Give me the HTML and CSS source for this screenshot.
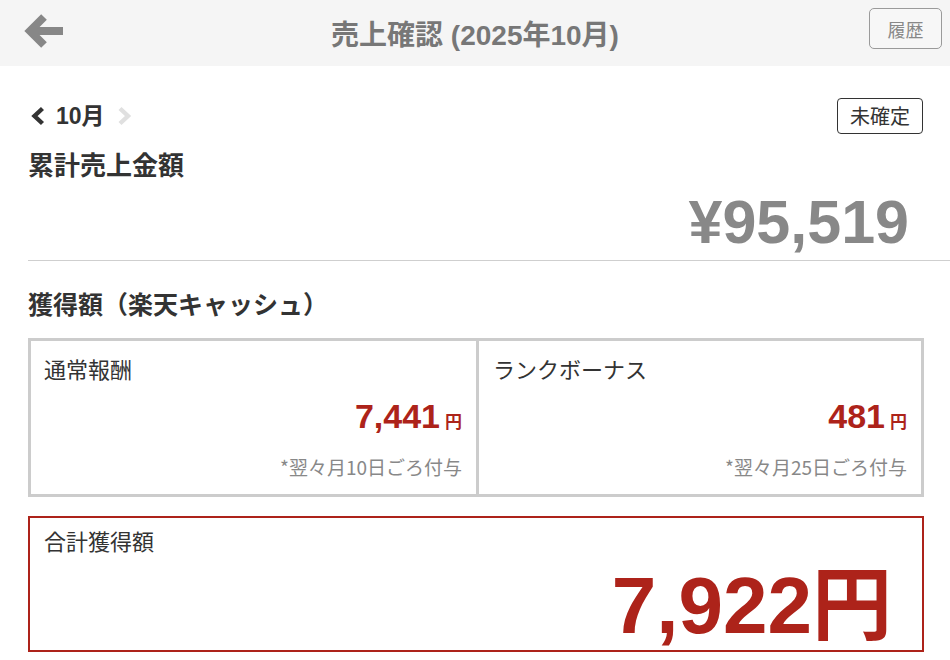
FILE: index.html
```html
<!DOCTYPE html>
<html lang="ja">
<head>
<meta charset="utf-8">
<title>売上確認</title>
<link rel="stylesheet" href="styles.css">
</head>
<body>
<header class="topbar">
  <button class="back" aria-label="戻る">
    <svg width="44" height="40" viewBox="0 0 44 40"><path d="M7 18 H40" stroke="#878787" stroke-width="8" fill="none"/><path d="M21 4 L7 18 L21 32" stroke="#878787" stroke-width="8" fill="none" stroke-linejoin="miter"/></svg>
  </button>
  <h1 class="title">売上確認 (2025年10月)</h1>
  <button class="history">履歴</button>
</header>
<main class="content">
  <div class="month-row">
    <div class="month-nav">
      <svg class="chev" width="16" height="20" viewBox="0 0 16 20"><path d="M13.5 2.5 L5.5 10 L13.5 17.5" stroke="#333" stroke-width="4.4" fill="none"/></svg>
      <span class="month">10月</span>
      <svg class="chev next" width="16" height="20" viewBox="0 0 16 20"><path d="M3 2.5 L11 10 L3 17.5" stroke="#e0e0e0" stroke-width="4.4" fill="none"/></svg>
    </div>
    <span class="badge">未確定</span>
  </div>
  <h2 class="heading">累計売上金額</h2>
  <div class="sales">¥95,519</div>
  <hr class="divider">
  <h2 class="heading heading2">獲得額（楽天キャッシュ）</h2>
  <div class="cards">
    <div class="card">
      <div class="card-label">通常報酬</div>
      <div class="card-amount"><span class="num">7,441</span><span class="yen">円</span></div>
      <div class="card-note">*翌々月10日ごろ付与</div>
    </div>
    <div class="card">
      <div class="card-label">ランクボーナス</div>
      <div class="card-amount"><span class="num">481</span><span class="yen">円</span></div>
      <div class="card-note">*翌々月25日ごろ付与</div>
    </div>
  </div>
  <div class="total">
    <div class="card-label">合計獲得額</div>
    <div class="total-amount"><span class="total-num">7,922</span><span class="total-yen">円</span></div>
  </div>
</main>
</body>
</html>
```
FILE: styles.css
```css
* { box-sizing: border-box; }
html, body { margin: 0; padding: 0; background: #fff; }
body {
  font-family: "Liberation Sans", "Noto Sans CJK JP", sans-serif;
  color: #333;
  overflow: hidden;
}
.topbar {
  height: 66px;
  background: #f5f5f5;
  display: grid;
  grid-template-columns: 120px 1fr 120px;
  align-items: center;
}
.back {
  border: 0;
  background: none;
  padding: 0;
  margin-left: 23px;
  width: 44px;
  height: 40px;
  justify-self: start;
  display: flex;
}
.title {
  margin: 0;
  text-align: center;
  font-size: 28px;
  font-weight: bold;
  color: #777;
}
.history {
  justify-self: end;
  margin-right: 8px;
  margin-top: -9px;
  width: 73px;
  height: 41px;
  border: 1px solid #9a9a9a;
  border-radius: 5px;
  background: #f7f7f7;
  color: #888;
  font-family: "Noto Sans CJK JP", sans-serif;
  font-size: 18px;
  padding: 0;
}
.content {
  padding: 0 26px 0 28px;
}
.month-row {
  margin-top: 32px;
  height: 36px;
  display: flex;
  align-items: center;
  justify-content: space-between;
}
.month-nav {
  display: flex;
  align-items: center;
}
.chev { margin-left: 1px; }
.month {
  font-size: 23px;
  line-height: 30px;
  font-weight: bold;
  color: #333;
  margin: 0 10px 0 11px;
}
.next { margin-left: 2px; }
.badge {
  height: 36px;
  border: 1px solid #333;
  border-radius: 4px;
  padding: 0 12px;
  font-family: "Noto Sans CJK JP", sans-serif;
  font-size: 20px;
  line-height: 33px;
  color: #333;
  margin-right: 1px;
}
.heading {
  margin: 14px 0 0;
  font-size: 26px;
  line-height: 36px;
  height: 36px;
  font-weight: bold;
  color: #333;
}
.heading2 { margin-top: 26px; font-size: 25px; }
.sales {
  margin-top: 6px;
  text-align: right;
  font-size: 61px;
  line-height: 64px;
  height: 64px;
  font-weight: bold;
  color: #888;
  padding-right: 15px;
}
.divider {
  margin: 6px -26px 0 0;
  border: 0;
  border-top: 1px solid #cfcfcf;
  height: 0;
}
.cards {
  margin-top: 15px;
  display: grid;
  grid-template-columns: 1fr 1fr;
  border: 3px solid #cccccc;
}
.card {
  padding: 12px 14px 15px 13px;
}
.card + .card {
  border-left: 3px solid #cccccc;
  padding-left: 14px;
}
.card-label {
  font-family: "Noto Sans CJK JP", sans-serif;
  font-size: 22px;
  line-height: 30px;
  height: 30px;
  color: #333;
}
.card-amount {
  margin-top: 13px;
  height: 40px;
  display: flex;
  justify-content: flex-end;
  align-items: baseline;
  color: #ad231a;
  font-weight: bold;
}
.num { font-size: 34px; line-height: 40px; }
.yen {
  font-family: "Noto Sans CJK JP", sans-serif;
  font-size: 17px;
  line-height: 20px;
  margin-left: 5px;
}
.card-note {
  margin-top: 19px;
  height: 24px;
  text-align: right;
  font-family: "Noto Sans CJK JP", sans-serif;
  font-size: 19px;
  line-height: 24px;
  color: #888;
}
.total {
  margin-top: 19px;
  border: 2px solid #ad231a;
  padding: 7px 30px 12px 14px;
}
.total-amount {
  margin-top: 3px;
  height: 80px;
  display: flex;
  justify-content: flex-end;
  align-items: baseline;
  font-weight: bold;
  color: #ad231a;
}
.total-num { font-size: 80px; line-height: 80px; }
.total-yen {
  font-family: "Noto Sans CJK JP", sans-serif;
  font-size: 80px;
  line-height: 80px;
  margin-left: 0;
}
```
